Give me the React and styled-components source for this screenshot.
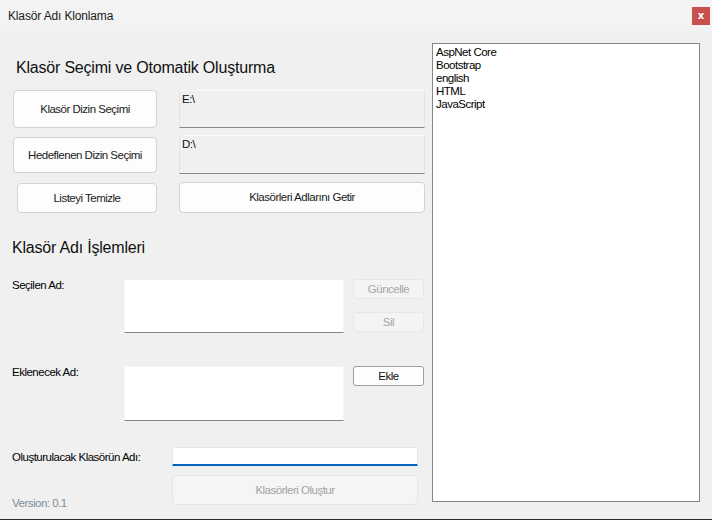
import styled, { createGlobalStyle } from 'styled-components';

const GlobalStyle = createGlobalStyle`
  html, body {
    margin: 0;
    padding: 0;
    background: #f0f0f0;
  }
  body {
    font-family: "Liberation Sans", Arial, sans-serif;
    color: #000;
  }
`;

const folders = ['AspNet Core', 'Bootstrap', 'english', 'HTML', 'JavaScript'];

export default function App() {
  return (
    <>
      <GlobalStyle />
      <Window>
        <TitleBar>
          <Title>Klasör Adı Klonlama</Title>
          <CloseButton type="button">x</CloseButton>
        </TitleBar>
        <Body>
          <LeftColumn>
            <Heading $top={15} $bottom={12} $indent={4}>
              Klasör Seçimi ve Otomatik Oluşturma
            </Heading>
            <PickerGrid>
              <Button $h={38}>Klasör Dizin Seçimi</Button>
              <PathBox>E:\</PathBox>
              <Button $h={36}>Hedeflenen Dizin Seçimi</Button>
              <PathBox>D:\</PathBox>
              <Button $h={30} $inset={4}>Listeyi Temizle</Button>
              <Button $h={31}>Klasörleri Adlarını Getir</Button>
            </PickerGrid>

            <Heading $top={25} $bottom={21}>Klasör Adı İşlemleri</Heading>
            <NameForm>
              <FieldLabel $nudge={-1}>Seçilen Ad:</FieldLabel>
              <NameArea readOnly />
              <ActionStack>
                <SmallButton disabled>Güncelle</SmallButton>
                <SmallButton disabled>Sil</SmallButton>
              </ActionStack>

              <FieldLabel $nudge={-1}>Eklenecek Ad:</FieldLabel>
              <NameArea readOnly />
              <ActionStack>
                <SmallButton>Ekle</SmallButton>
              </ActionStack>
            </NameForm>

            <CreateGrid>
              <FieldLabel $center>Oluşturulacak Klasörün Adı:</FieldLabel>
              <NameInput />
              <Version>Version: 0.1</Version>
              <Button $h={30} disabled>Klasörleri Oluştur</Button>
            </CreateGrid>
          </LeftColumn>

          <FolderList>
            {folders.map((name) => (
              <li key={name}>{name}</li>
            ))}
          </FolderList>
        </Body>
      </Window>
    </>
  );
}

const Window = styled.div`
  width: 712px;
  height: 520px;
  box-sizing: border-box;
  border-bottom: 1px solid #2b2b2b;
  display: flex;
  flex-direction: column;
  background: #f0f0f0;
  overflow: hidden;
`;

const TitleBar = styled.div`
  height: 31px;
  flex: none;
  display: flex;
  align-items: center;
  justify-content: space-between;
  padding: 0 2px 0 8px;
  background: #f3f3f3;
`;

const Title = styled.span`
  font-size: 12px;
  line-height: 14px;
  letter-spacing: -0.15px;
  color: #1a1a1a;
`;

const CloseButton = styled.button`
  width: 18px;
  height: 18px;
  padding: 0;
  border: none;
  background: #c94f4f;
  color: #fff;
  font-family: "DejaVu Sans", sans-serif;
  font-size: 10px;
  font-weight: bold;
  line-height: 18px;
  text-align: center;
`;

const Body = styled.div`
  flex: 1;
  display: grid;
  grid-template-columns: 413px 268px;
  column-gap: 7px;
  align-items: start;
  padding: 12px 0 0 12px;
`;

const LeftColumn = styled.div`
  display: flex;
  flex-direction: column;
  font-size: 11.5px;
  letter-spacing: -0.5px;
  line-height: 14px;
`;

const Heading = styled.h2`
  margin: ${(p) => p.$top}px 0 ${(p) => p.$bottom}px ${(p) => p.$indent || 0}px;
  font-size: 16px;
  font-weight: normal;
  line-height: 20px;
  letter-spacing: -0.2px;
  color: #111;
`;

const PickerGrid = styled.div`
  display: grid;
  grid-template-columns: 144px 246px;
  grid-template-rows: 38px 39px 32px;
  column-gap: 22px;
  row-gap: 7px;
  padding-left: 1px;
`;

const Button = styled.button`
  height: ${(p) => p.$h}px;
  margin-left: ${(p) => p.$inset || 0}px;
  align-self: ${(p) => (p.$inset ? 'end' : 'center')};
  box-sizing: border-box;
  padding: 0 6px;
  font: inherit;
  letter-spacing: inherit;
  color: #1b1b1b;
  background: #fdfdfd;
  border: 1px solid #d3d3d3;
  border-radius: 4px;

  &:disabled {
    color: #a2a2a2;
    background: #f5f5f5;
    border-color: #e6e6e6;
  }
`;

const PathBox = styled.div`
  box-sizing: border-box;
  height: 100%;
  padding: 1px 2px;
  background: #f0f0f0;
  border: 1px solid #e4e4e4;
  border-top-color: #f9f9f9;
  border-bottom-color: #888;
  color: #111;
`;

const NameForm = styled.div`
  display: grid;
  grid-template-columns: 103px 220px 71px;
  grid-template-rows: 54px 55px;
  column-gap: 9px;
  row-gap: 33px;
`;

const FieldLabel = styled.label`
  align-self: ${(p) => (p.$center ? 'center' : 'start')};
  margin-top: ${(p) => p.$nudge || 0}px;
  color: #000;
  white-space: nowrap;
`;

const NameArea = styled.textarea`
  box-sizing: border-box;
  width: 100%;
  height: 100%;
  margin: 0;
  padding: 2px;
  resize: none;
  outline: none;
  font: inherit;
  background: #fff;
  border: 1px solid #f4f4f4;
  border-bottom-color: #868686;
  border-radius: 0;
`;

const ActionStack = styled.div`
  display: flex;
  flex-direction: column;
  gap: 13px;
`;

const SmallButton = styled.button`
  height: 20px;
  box-sizing: border-box;
  padding: 0;
  font: inherit;
  letter-spacing: inherit;
  line-height: 18px;
  color: #111;
  background: #fdfdfd;
  border: 1px solid #9f9f9f;
  border-radius: 3px;

  &:disabled {
    color: #a6a6a6;
    background: #f4f4f4;
    border-color: #e7e7e7;
  }
`;

const CreateGrid = styled.div`
  margin-top: 26px;
  display: grid;
  grid-template-columns: 160px 246px;
  grid-template-rows: 19px 30px;
  row-gap: 9px;
`;

const NameInput = styled.input`
  box-sizing: border-box;
  width: 100%;
  height: 19px;
  margin: 0;
  padding: 0 3px;
  font: inherit;
  outline: none;
  background: #fff;
  border: 1px solid #e6e6e6;
  border-bottom: 2px solid #0067c0;
  border-radius: 2px 2px 0 0;
`;

const Version = styled.span`
  align-self: end;
  margin-bottom: -5px;
  color: #7f8b97;
`;

const FolderList = styled.ul`
  box-sizing: border-box;
  height: 459px;
  margin: 0;
  padding: 2px 3px;
  list-style: none;
  background: #fff;
  border: 1px solid #828790;
  font-size: 11.5px;
  line-height: 13px;
  letter-spacing: -0.5px;
  color: #000;
`;
